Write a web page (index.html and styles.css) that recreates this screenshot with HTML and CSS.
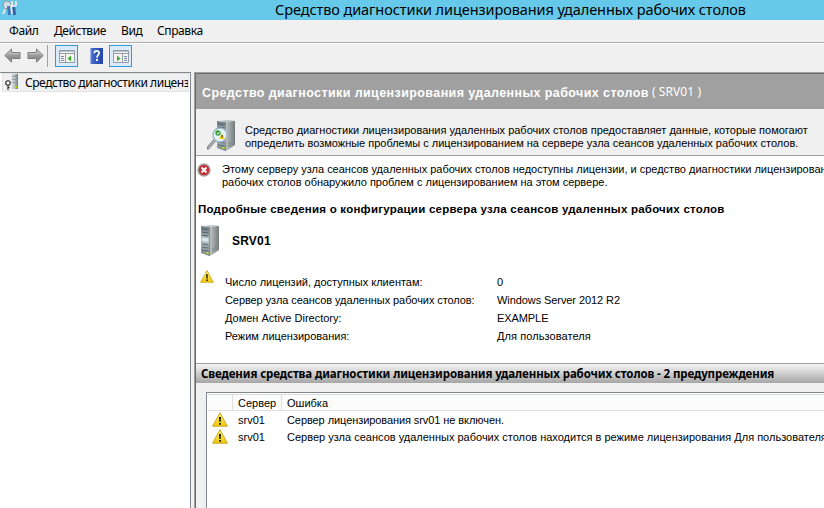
FILE: index.html
```html
<!DOCTYPE html>
<html lang="ru">
<head>
<meta charset="utf-8">
<title>Средство диагностики лицензирования удаленных рабочих столов</title>
<link rel="stylesheet" href="styles.css">
</head>
<body>
<svg width="0" height="0" class="defs">
  <defs>
    <linearGradient id="metal"><stop offset="0" stop-color="#e8ecec"/><stop offset=".5" stop-color="#bcc1c2"/><stop offset="1" stop-color="#737b7d"/></linearGradient>
    <linearGradient id="front" x2="0" y2="1"><stop offset="0" stop-color="#6a7a82"/><stop offset=".45" stop-color="#b4c0c5"/><stop offset="1" stop-color="#7b898f"/></linearGradient>
    <linearGradient id="yellow" x2="0" y2="1"><stop offset="0" stop-color="#fff27a"/><stop offset="1" stop-color="#f0c808"/></linearGradient>
    <linearGradient id="arrow" x2="0" y2="1"><stop offset="0" stop-color="#bcbcbc"/><stop offset="1" stop-color="#7c7c7c"/></linearGradient>
    <linearGradient id="blue"><stop offset="0" stop-color="#6f8fdc"/><stop offset=".25" stop-color="#3c62c4"/><stop offset="1" stop-color="#2446a8"/></linearGradient>
    <symbol id="server" viewBox="0 0 20 32">
      <path d="M1 1 9 0 19 1V25L10 31 1 28Z" fill="url(#metal)"/>
      <path d="M1 1 9.500 2V31L1 28Z" fill="url(#front)"/>
      <path d="M1 1 19 1 9.500 2Z" fill="#c9cfd0"/>
      <path d="M2 4 8.500 5M2 7 8.500 8M2 10 8.500 11" stroke="#4f5d64"/>
      <path d="M2 12.500 8.500 13.500V17L2 16Z" fill="#dbe6ea"/>
      <path d="M2 19 8.500 20M2 22 8.500 23M2 25 8.500 26" stroke="#5e6b71"/>
      <path d="M9.500 2V31" stroke="#606b6c" stroke-width=".5"/>
      <path d="M12 24 16 22M12 26 16 24" stroke="#828a8b"/>
      <path d="M6.500 27h2v2h-2z" fill="#b6e600"/>
    </symbol>
    <symbol id="warn" viewBox="0 0 16 15">
      <path d="M8 .7 15.400 14.200H.6Z" fill="url(#yellow)" stroke="#cfa623" stroke-linejoin="round"/>
      <path d="M7 5h2l-.4 5h-1.200zM7.200 11h1.700v1.800H7.200z" fill="#111"/>
    </symbol>
    <symbol id="back" viewBox="0 0 17 15">
      <path d="M.8 7.500 7.500.9V4.500H16V10.500H7.500V14.100Z" fill="url(#arrow)" stroke="#7c7c7c" stroke-linejoin="round"/>
      <path d="M2.500 7.200 6.500 3.200V5.500H15" fill="none" stroke="#cfcfcf" stroke-width=".8"/>
    </symbol>
  </defs>
</svg>
<header class="titlebar">
  <svg class="app-icon" width="18" height="18" viewBox="0 0 18 18">
    <circle cx="6" cy="5" r="4" fill="#cfe1e6" stroke="#8b989c"/>
    <path d="M4 9 2 14" stroke="#e4e4e4" stroke-width="2"/>
    <path d="M11 1v4l2 2 2-2V1" fill="none" stroke="#dfe6ee" stroke-width="2"/>
    <path d="M12.700 7 13.500 15" stroke="#3a60a4" stroke-width="3"/>
    <path d="M7.500 6 8.500 15" stroke="#4a74b8" stroke-width="3"/>
    <path d="M10 5 11 14" stroke="#f3f3f3" stroke-width="1.500"/>
  </svg>
  <h1 class="title">Средство диагностики лицензирования удаленных рабочих столов</h1>
</header>
<nav class="menu"><span class="m-file">Файл</span><span class="m-action">Действие</span><span class="m-view">Вид</span><span class="m-help">Справка</span></nav>
<div class="toolbar">
  <svg class="back" width="17" height="15"><use href="#back"/></svg>
  <svg class="forward" width="17" height="15"><use href="#back"/></svg>
  <span class="separator"></span>
  <span class="tool">
    <svg width="16" height="13" viewBox="0 0 16 13"><path d="M.5.500h15v12H.5z" fill="#f6f5f1" stroke="#949ca4"/><path d="M1 1h14v1H1z" fill="#b4bcc4"/><path d="M1 3.500h14M6.500 4v8" stroke="#949ca4"/><path d="M2 6.500h3M2 8.500h3M2 10.500h3" stroke="#6f8db0"/><path d="M12 5.500v6L8.500 8.500z" fill="#3eae2a"/></svg>
  </span>
  <svg class="help" width="13" height="16" viewBox="0 0 13 16"><path d="M0 0h13v16H0z" fill="url(#blue)"/><path d="M.5 0v16" stroke="#9fb4e8"/><path d="M4.300 5.200C4.500 2 9.500 2.300 9.200 5.200 9 7 7 7.300 7 9.700" fill="none" stroke="#fff" stroke-width="1.700"/><path d="M6 11h2v2H6z" fill="#fff"/></svg>
  <span class="tool">
    <svg width="16" height="13" viewBox="0 0 16 13"><path d="M.5.500h15v12H.5z" fill="#f6f5f1" stroke="#949ca4"/><path d="M1 1h14v1H1z" fill="#b4bcc4"/><path d="M1 3.500h14M9.500 4v8" stroke="#949ca4"/><path d="M11 6.500h3M11 8.500h3M11 10.500h3" stroke="#6f8db0"/><path d="M4 5.500v6L7.500 8.500z" fill="#3eae2a"/></svg>
  </span>
</div>
<div class="workspace">
  <aside class="tree">
    <div class="tree-item">
      <svg width="14" height="17" viewBox="0 0 14 17"><path d="M6 0h7v15H6z" fill="url(#metal)"/><path d="M7 2.500h5M7 5.500h5M7 8.500h5" stroke="#8f9ca0"/><path d="M10 12h2v2h-2z" fill="#a5df00"/><circle cx="3" cy="9" r="2.200" fill="#fff" stroke="#222" stroke-width="1.100"/><path d="M3 11v5M3 13.500h1.500" stroke="#222" stroke-width="1.100"/></svg>
      <span class="tree-label">Средство диагностики лицензирования</span>
    </div>
  </aside>
  <main class="content">
    <div class="banner"><strong class="banner-title">Средство диагностики лицензирования удаленных рабочих столов</strong><span class="banner-server">( SRV01 )</span></div>
    <section class="intro">
      <svg class="intro-icon" width="29" height="32" viewBox="0 0 29 32">
        <svg x="9" width="20" height="32"><use href="#server"/></svg>
        <path d="M8 20 1 28" stroke="#7b8588" stroke-width="3" stroke-linecap="round"/>
        <path d="M8 20 1.500 27.500" stroke="#d5dadb" stroke-linecap="round"/>
        <circle cx="13" cy="15" r="7" fill="#e5f3fa" stroke="#9db6c3" stroke-width="1.500"/>
        <circle cx="11" cy="13" r="2.700" fill="#29a329"/><path d="M9.700 13 11 14.300 12.500 11.700" fill="none" stroke="#fff" stroke-width=".9"/>
        <path d="M15 13.500 18 19H12z" fill="#f5ce15"/><path d="M15 15v2.500" stroke="#222"/>
      </svg>
      <p class="text intro-text">Средство диагностики лицензирования удаленных рабочих столов предоставляет данные, которые помогают<br>определить возможные проблемы с лицензированием на сервере узла сеансов удаленных рабочих столов.</p>
    </section>
    <section class="details">
      <div class="alert">
        <svg width="14" height="14" viewBox="0 0 14 14"><circle cx="7" cy="7" r="6" fill="#c52b32" stroke="#a7a3a3" stroke-width="1.500"/><path d="M4.500 4.500 9.500 9.500M9.500 4.500 4.500 9.500" stroke="#fff" stroke-width="2"/></svg>
        <p class="text alert-text">Этому серверу узла сеансов удаленных рабочих столов недоступны лицензии, и средство диагностики лицензирования<br>рабочих столов обнаружило проблем с лицензированием на этом сервере.</p>
      </div>
      <h2 class="details-title">Подробные сведения о конфигурации сервера узла сеансов удаленных рабочих столов</h2>
      <div class="server"><svg width="20" height="32"><use href="#server"/></svg><strong class="server-name">SRV01</strong></div>
      <div class="facts">
        <svg width="14" height="13"><use href="#warn"/></svg>
        <dl class="fact-list text">
          <dt>Число лицензий, доступных клиентам:</dt><dd>0</dd>
          <dt class="tight">Сервер узла сеансов удаленных рабочих столов:</dt><dd class="tight">Windows Server 2012 R2</dd>
          <dt>Домен Active Directory:</dt><dd class="tight">EXAMPLE</dd>
          <dt>Режим лицензирования:</dt><dd class="loose">Для пользователя</dd>
        </dl>
      </div>
    </section>
    <h2 class="section-bar">Сведения средства диагностики лицензирования удаленных рабочих столов - 2 предупреждения</h2>
    <section class="results">
      <div class="grid text">
        <div class="row head"><span></span><span>Сервер</span><span>Ошибка</span></div>
        <div class="row"><svg width="16" height="15"><use href="#warn"/></svg><span>srv01</span><span class="tight">Сервер лицензирования srv01 не включен.</span></div>
        <div class="row"><svg width="16" height="15"><use href="#warn"/></svg><span>srv01</span><span>Сервер узла сеансов удаленных рабочих столов находится в режиме лицензирования Для пользователя</span></div>
      </div>
    </section>
  </main>
</div>
</body>
</html>
```
FILE: styles.css
```css
* { box-sizing: border-box; }
body { margin: 0; width: 824px; height: 508px; overflow: hidden; display: flex; flex-direction: column; background: #f0f0f0; color: #000; font: 12px "Noto Sans", sans-serif; white-space: nowrap; }
h1, h2, p, dl, dd { margin: 0; }
svg { flex: none; display: block; }
.defs { position: absolute; }
.titlebar { height: 20px; background: #66c9ea; display: flex; flex: none; }
.app-icon { margin-left: 1px; }
.title { margin-left: 256px; font: 14.5px/18px "Noto Sans", sans-serif; letter-spacing: -.08px; }
.menu { height: 23px; flex: none; display: flex; line-height: 22px; border-bottom: 1px solid #adadad; padding-left: 9px; letter-spacing: -.4px; }
.m-file { width: 45px; }
.m-action { width: 67px; }
.m-view { width: 36px; }
.toolbar { height: 29px; flex: none; display: flex; align-items: center; border-top: 1px solid #fafafa; padding: 0 0 5px 4px; }
.forward { margin-left: 6px; transform: scaleX(-1); }
.separator { width: 1px; height: 22px; background: #a0a0a0; margin: 0 7px 0 3px; }
.tool { width: 23px; height: 22px; border: 1px solid #3399dd; background: #dcebfa; display: flex; align-items: center; justify-content: center; padding-top: 2px; }
.help { margin: 0 6px 0 12px; }
.workspace { flex: 1; min-height: 0; display: flex; }
.tree { width: 191px; flex: none; background: #fff; border: solid #828790; border-width: 1px 1px 0 0; overflow: hidden; }
.tree-item { height: 19px; margin-left: 2px; width: 187px; overflow: hidden; background: #f0f0f0; border: 1px solid #e3e3e3; display: flex; align-items: center; padding-left: 2px; }
.tree-label { margin-left: 6px; letter-spacing: -.44px; }
.content { flex: 1; min-width: 0; margin-left: 3px; border: solid #a0a0a0; border-width: 1px 0 0 1px; box-shadow: inset 1px 1px #696969; padding: 1px 0 0 1px; overflow: hidden; display: flex; flex-direction: column; }
.banner { height: 35px; flex: none; background: #a0a0a0; color: #fff; display: flex; align-items: center; padding-left: 6px; }
.banner-title { font: bold 12.5px "Liberation Sans", sans-serif; margin-top: 3px; letter-spacing: .41px; }
.banner-server { margin-left: 3px; letter-spacing: .1px; }
.intro { height: 47px; flex: none; border-bottom: 1px solid #a0a0a0; display: flex; padding-left: 11px; }
.intro-icon { margin-top: 11px; }
.text { font: 11px/13px "Liberation Sans", sans-serif; }
.intro-text { margin: 15px 0 0 9px; letter-spacing: -.01px; }
.details { height: 207px; flex: none; background: #fff; padding-left: 1px; }
.alert { display: flex; padding-top: 7px; }
.alert-text { margin-left: 11px; letter-spacing: -.01px; }
.details-title { margin: 13px 0 0 1px; font: bold 11.5px/14px "Liberation Sans", sans-serif; letter-spacing: .23px; }
.server { display: flex; margin: 9px 0 0 3px; }
.server-name { margin: 9px 0 0 12px; font: bold 12px/15px "Liberation Sans", sans-serif; letter-spacing: .2px; }
.facts { display: flex; margin: 13px 0 0 3px; }
.fact-list { display: grid; grid-template-columns: 272px 1fr; grid-auto-rows: 18px; line-height: 18px; margin: 3px 0 0 11px; }
.tight { letter-spacing: -.08px; }
.loose { letter-spacing: .08px; }
.section-bar { height: 20px; flex: none; border-top: 1px solid #a0a0a0; background: linear-gradient(#f5f5f5, #a6a6a6); padding-left: 5px; font: bold 11.5px/19px "Noto Sans", sans-serif; letter-spacing: -.11px; }
.results { flex: 1; padding: 9px 0 0 10px; }
.grid { height: 100%; background: #fff; border: solid #828790; border-width: 1px 0 0 1px; padding: 1px 0 0 1px; }
.row { display: grid; grid-template-columns: 25px 49px 1fr; height: 17px; line-height: 19px; }
.row > svg { margin: 1px 0 0 4px; }
.row > span { padding-left: 5px; }
.head { background: #fcfcfc; border: solid #dedede; border-width: 1px 0; }
.head > span { border-right: 1px solid #dedede; line-height: 16px; }
.head > span:last-child { border-right: 0; }
```
